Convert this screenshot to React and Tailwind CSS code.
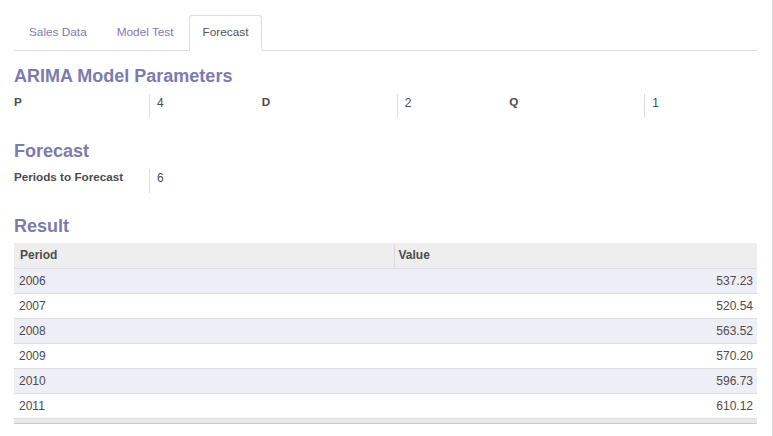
import React from 'react';

const params = [
  { label: 'P', value: '4' },
  { label: 'D', value: '2' },
  { label: 'Q', value: '1' },
];

const rows = [
  ['2006', '537.23'],
  ['2007', '520.54'],
  ['2008', '563.52'],
  ['2009', '570.20'],
  ['2010', '596.73'],
  ['2011', '610.12'],
];

const tabs = ['Sales Data', 'Model Test', 'Forecast'];

const Field = ({ label, value }) => (
  <div className="flex">
    <div className="w-[135px] text-[11.7px] leading-[16px] font-bold text-[#4c4c4c]">{label}</div>
    <div className="w-px h-[24px] bg-[#dddddd]"></div>
    <div className="pl-[7px] pt-[1px] text-[12px] leading-[16px] text-[#4c4c4c]">{value}</div>
  </div>
);

const App = () => {
  return (
    <div className="w-[773px] h-[436px] bg-white border-r border-[#dddddd] font-['Liberation_Sans',Arial,sans-serif] overflow-hidden">
      <div className="pl-[14px] pr-[15px] pt-[15px]">
        {/* tabs */}
        <div className="flex border-b border-[#dddddd] h-[36px]">
          {tabs.map((t) => (
            <div
              key={t}
              className={
                t === 'Forecast'
                  ? 'h-[36px] -mb-px px-[13px] pt-[8px] text-[11.8px] text-[#555555] bg-white border border-[#dddddd] border-b-white rounded-t-[3px]'
                  : 'h-[35px] px-[15px] pt-[9px] text-[11.8px] text-[#7c7bad]'
              }
            >
              {t}
            </div>
          ))}
        </div>

        <h2 className="mt-[14px] text-[18px] leading-[22px] font-bold text-[#7c7bad]">ARIMA Model Parameters</h2>
        <div className="mt-[7px] grid grid-cols-3">
          {params.map((p) => (
            <Field key={p.label} label={p.label} value={p.value} />
          ))}
        </div>

        <h2 className="mt-[22px] text-[18px] leading-[22px] font-bold text-[#7c7bad]">Forecast</h2>
        <div className="mt-[7px]">
          <Field label="Periods to Forecast" value="6" />
        </div>

        <h2 className="mt-[22px] text-[18px] leading-[22px] font-bold text-[#7c7bad]">Result</h2>
        <table className="mt-[6px] w-full border-collapse text-[12px] text-[#4c4c4c]">
          <thead>
            <tr className="h-[25px] bg-[#eeeeee] border-b border-[#dddddd]">
              <th className="w-[380px] px-[6px] text-left font-bold border-r border-[#dddddd]">Period</th>
              <th className="px-[4px] text-left font-bold">Value</th>
            </tr>
          </thead>
          <tbody>
            {rows.map(([period, value], i) => (
              <tr key={period} className={(i % 2 === 0 ? 'bg-[#eeeef6]' : 'bg-white') + ' h-[25px] border-b border-[#dddddd]'}>
                <td className="px-[5px]">{period}</td>
                <td className="px-[4px] text-right">{value}</td>
              </tr>
            ))}
          </tbody>
        </table>
        <div className="h-[5px] bg-[#e9e9e9] border-b border-[#cccccc]"></div>
      </div>
    </div>
  );
};

export default App;
